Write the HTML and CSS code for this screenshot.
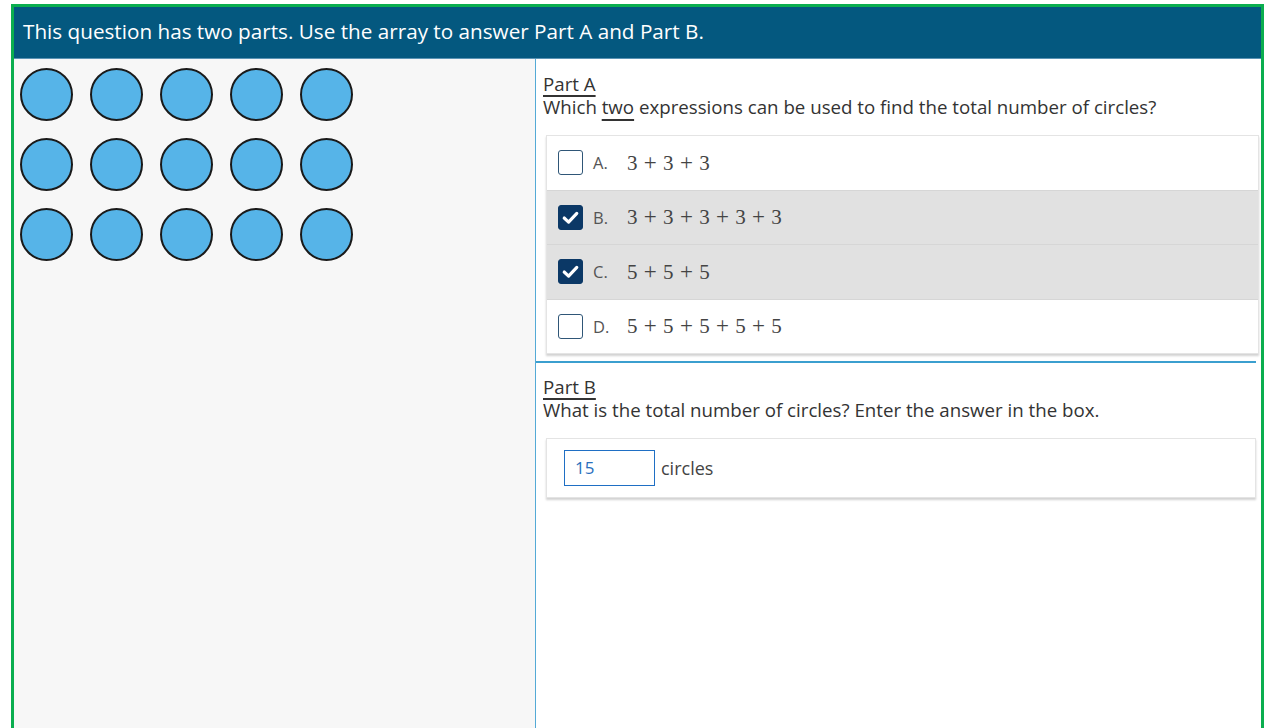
FILE: index.html
```html
<!DOCTYPE html>
<html lang="en">
<head>
<meta charset="utf-8">
<title>Two-part question</title>
<link rel="stylesheet" href="styles.css">
</head>
<body>
<div class="item">
  <div class="stem">This question has two parts. Use the array to answer Part A and Part B.</div>
  <div class="panes">
    <div class="stimulus">
      <div class="array">
        <span class="dot"></span><span class="dot"></span><span class="dot"></span><span class="dot"></span><span class="dot"></span>
        <span class="dot"></span><span class="dot"></span><span class="dot"></span><span class="dot"></span><span class="dot"></span>
        <span class="dot"></span><span class="dot"></span><span class="dot"></span><span class="dot"></span><span class="dot"></span>
      </div>
    </div>
    <div class="response">
      <section class="part">
        <div class="part-title"><span>Part A</span></div>
        <div class="prompt">Which <u>two</u> expressions can be used to find the total number of circles?</div>
        <div class="choices">
          <div class="choice">
            <span class="box"></span><span class="letter">A.</span><span class="math">3<span class="op">+</span>3<span class="op">+</span>3</span>
          </div>
          <div class="choice selected">
            <span class="box checked"><svg viewBox="0 0 24 24" width="21" height="21"><path d="M4.8 12.6 L9.8 17.2 L19.2 7.2" fill="none" stroke="#fff" stroke-width="3.6" stroke-linecap="round" stroke-linejoin="round"/></svg></span><span class="letter">B.</span><span class="math">3<span class="op">+</span>3<span class="op">+</span>3<span class="op">+</span>3<span class="op">+</span>3</span>
          </div>
          <div class="choice selected">
            <span class="box checked"><svg viewBox="0 0 24 24" width="21" height="21"><path d="M4.8 12.6 L9.8 17.2 L19.2 7.2" fill="none" stroke="#fff" stroke-width="3.6" stroke-linecap="round" stroke-linejoin="round"/></svg></span><span class="letter">C.</span><span class="math">5<span class="op">+</span>5<span class="op">+</span>5</span>
          </div>
          <div class="choice">
            <span class="box"></span><span class="letter">D.</span><span class="math">5<span class="op">+</span>5<span class="op">+</span>5<span class="op">+</span>5<span class="op">+</span>5</span>
          </div>
        </div>
      </section>
      <section class="part part-b">
        <div class="part-title"><span>Part B</span></div>
        <div class="prompt">What is the total number of circles? Enter the answer in the box.</div>
        <div class="answer">
          <span class="entry">15</span><span class="unit">circles</span>
        </div>
      </section>
    </div>
  </div>
</div>
</body>
</html>
```

FILE: styles.css
```css
html, body {
  margin: 0;
  padding: 0;
  background: #fff;
  height: 100%;
  overflow: hidden;
}

body {
  font-family: "Open Sans", "Noto Sans", sans-serif;
  color: #333;
}

.item {
  margin: 4px 0 0 11px;
  width: 1247px;
  height: 760px;
  border: 3px solid #0bae4f;
  display: flex;
  flex-direction: column;
}

.stem {
  height: 51px;
  background: #04587f;
  border-bottom: 1px solid #5a93b4;
  color: #fff;
  font-size: 20.7px;
  line-height: 48px;
  padding-left: 9px;
}

.panes {
  flex: 1;
  display: flex;
}

.stimulus {
  width: 521px;
  background: #f7f7f7;
  border-right: 1px solid #54aad6;
}

.array {
  display: grid;
  grid-template-columns: repeat(5, 53px);
  gap: 17px;
  padding: 9px 0 0 6px;
}

.dot {
  width: 49px;
  height: 49px;
  border-radius: 50%;
  background: #56b4e8;
  border: 2px solid #1a1a1a;
}

.response {
  flex: 1;
  background: #fff;
}

.part {
  padding: 13px 2px 0 7px;
}

.part-b {
  border-top: 2px solid #3b9fcf;
  margin-top: 7px;
  margin-right: 5px;
  padding-top: 12px;
  padding-right: 0;
}

.part-title {
  font-size: 18.7px;
  line-height: 23px;
}

.part-title span,
.prompt u {
  text-decoration: underline;
  text-decoration-thickness: 1.5px;
  text-underline-offset: 4px;
}

.prompt u {
  text-underline-offset: 5px;
}

.prompt {
  font-size: 18.7px;
  line-height: 24px;
}

.choices {
  margin: 16px 0 0 3px;
  border: 1px solid #e4e4e4;
  box-shadow: 0 2px 2px rgba(0, 0, 0, 0.18);
  background: #fff;
}

.choice {
  height: 53.5px;
  display: flex;
  align-items: center;
  padding-left: 11px;
  border-top: 1px solid #d6d6d6;
}

.choice:first-child {
  border-top: none;
}

.choice.selected {
  background: #e1e1e1;
}

.box {
  width: 23px;
  height: 23px;
  border: 1.5px solid #2f5677;
  border-radius: 3px;
  background: #fff;
  display: flex;
  align-items: center;
  justify-content: center;
  flex: none;
}

.box.checked {
  background: #0b3866;
  border-color: #0b3866;
}

.letter {
  margin-left: 10px;
  width: 34px;
  font-size: 16.5px;
  color: #555;
}

.math {
  font-family: "Liberation Serif", "DejaVu Serif", serif;
  font-size: 21px;
  color: #444;
}

.op {
  font-size: 23px;
  margin: 0 6.3px;
}

.answer {
  margin: 16px 0 0 3px;
  height: 58px;
  border: 1px solid #e4e4e4;
  box-shadow: 0 2px 2px rgba(0, 0, 0, 0.18);
  display: flex;
  align-items: center;
  padding-left: 17px;
}

.entry {
  width: 79px;
  height: 34px;
  border: 1px solid #1f6fc4;
  padding-left: 10px;
  color: #2a6fbd;
  font-size: 17px;
  line-height: 34px;
}

.unit {
  margin-left: 6px;
  font-size: 18px;
  color: #444;
}
```
